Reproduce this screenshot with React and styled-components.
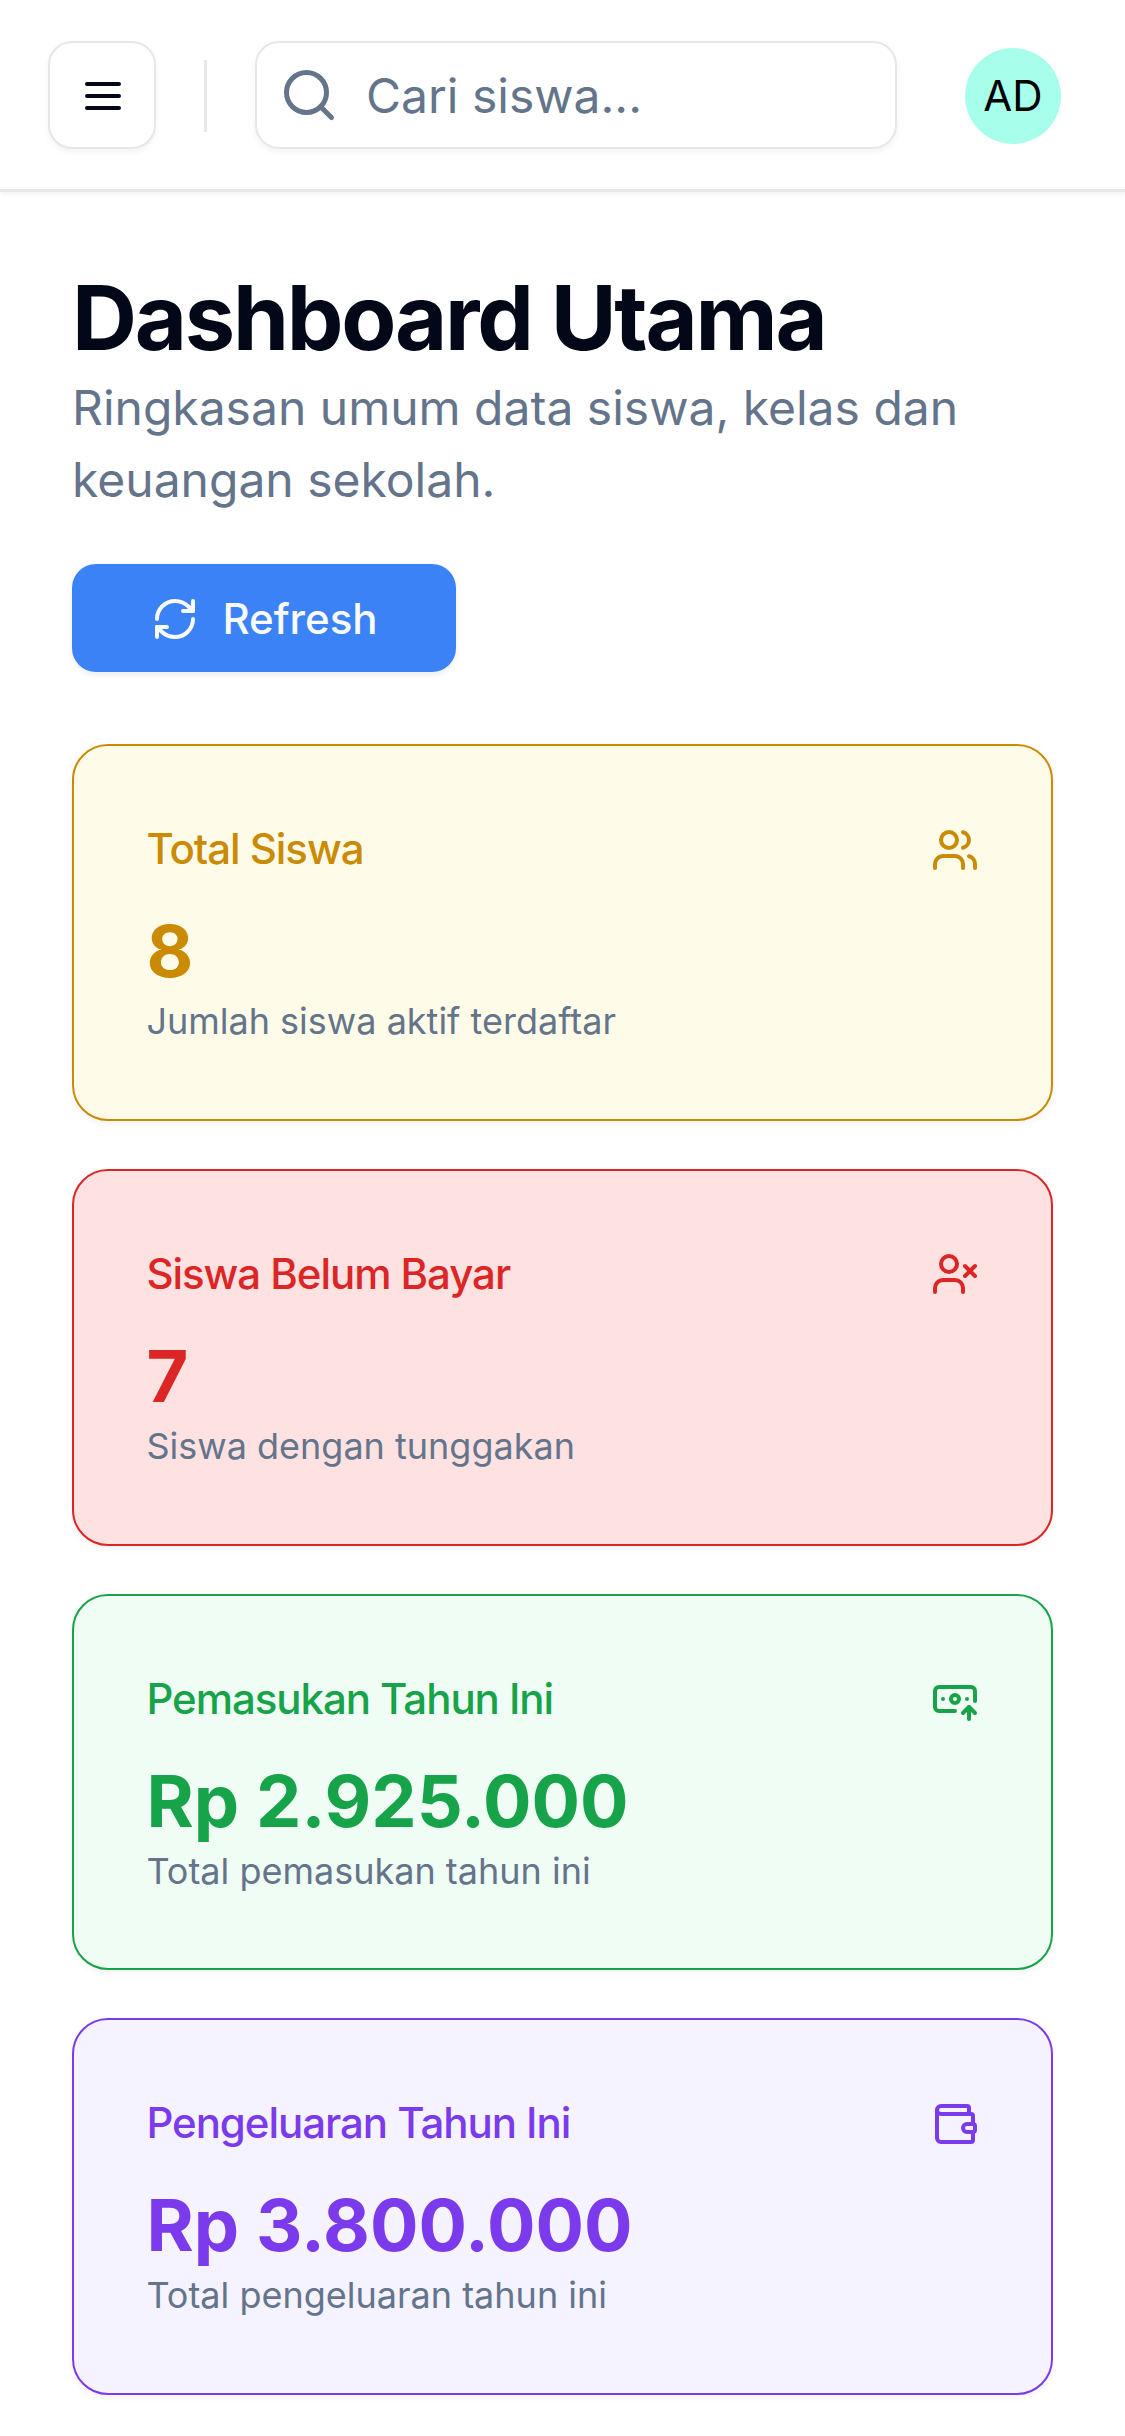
import React from "react";
import styled, { createGlobalStyle } from "styled-components";
import { Search, RefreshCw, Users, UserX, BanknoteArrowUp, Wallet } from "lucide-react";

const GlobalStyle = createGlobalStyle`
  *, *::before, *::after { box-sizing: border-box; }
  body {
    margin: 0;
    background: #fff;
    color: #020817;
    font-family: Inter, "Liberation Sans", sans-serif;
    font-size: 48px;
    line-height: 72px;
  }
  button, input { font-family: inherit; }
`;

const Page = styled.div`
  width: 1125px;
  height: 2436px;
  overflow: hidden;
`;

const Header = styled.header`
  display: flex;
  align-items: center;
  height: 192px;
  padding: 1px 64px 0 48px;
  border-bottom: 3px solid #e5e7eb;
  box-shadow: 0 3px 3px rgba(0, 0, 0, 0.04);
`;

const MenuButton = styled.button`
  display: flex;
  align-items: center;
  justify-content: center;
  width: 108px;
  height: 108px;
  padding: 2px 0 0 2px;
  color: #020817;
  background: #fff;
  border: 2px solid #e5e7eb;
  border-radius: 24px;
  box-shadow: 0 3px 6px rgba(0, 0, 0, 0.05);
`;

const Divider = styled.div`
  width: 3px;
  height: 72px;
  margin: 2px 48px 0;
  background: #e5e7eb;
`;

const SearchBox = styled.label`
  display: flex;
  align-items: center;
  gap: 27px;
  width: 642px;
  height: 108px;
  padding-left: 22px;
  color: #64748b;
  border: 2px solid #e5e7eb;
  border-radius: 24px;
  box-shadow: 0 3px 6px rgba(0, 0, 0, 0.05);
`;

const SearchInput = styled.input`
  flex: 1;
  min-width: 0;
  padding: 2px 0 0;
  border: 0;
  outline: 0;
  background: transparent;
  font-size: 48px;
  line-height: 72px;
  &::placeholder { color: #64748b; opacity: 1; }
`;

const Avatar = styled.div`
  display: grid;
  place-items: center;
  width: 96px;
  height: 96px;
  margin-top: 2px;
  margin-left: auto;
  border-radius: 50%;
  background: #a7ffeb;
  color: #000;
  font-size: 42px;
  line-height: 60px;
`;

const Main = styled.main`
  padding: 72px;
`;

const Title = styled.h1`
  margin: 0;
  padding: 3px 0;
  font-size: 90px;
  font-weight: 700;
  line-height: 102px;
  letter-spacing: -0.025em;
`;

const Subtitle = styled.p`
  margin: 0;
  color: #64748b;
`;

const RefreshButton = styled.button`
  display: flex;
  align-items: center;
  justify-content: center;
  gap: 23px;
  width: 384px;
  height: 108px;
  margin: 48px 0 72px;
  padding: 2px 0 0;
  border: 0;
  border-radius: 24px;
  background: #3b82f6;
  color: #f8fafc;
  font-size: 42px;
  font-weight: 500;
  line-height: 60px;
  box-shadow: 0 3px 6px rgba(0, 0, 0, 0.08);

  svg { margin-left: 1px; }
`;

const CardList = styled.section`
  display: grid;
  gap: 48px;
`;

const Card = styled.article`
  height: 376.8px;
  padding: 73px 72.4px 0;
  border: 2px solid ${(p) => p.$tone};
  border-radius: 36px;
  background: ${(p) => p.$fill};
  color: ${(p) => p.$tone};
  box-shadow: 0 3px 6px rgba(0, 0, 0, 0.05);
`;

const CardHeader = styled.div`
  display: flex;
  align-items: center;
  justify-content: space-between;
  padding-bottom: 24px;

  svg { margin-top: 1px; }
`;

const CardTitle = styled.h3`
  margin: 0;
  font-size: 42px;
  font-weight: 500;
  line-height: 60px;
  letter-spacing: -0.025em;
`;

const CardValue = styled.div`
  font-size: 72px;
  font-weight: 700;
  line-height: 96px;
`;

const CardNote = styled.p`
  margin: 0;
  color: #64748b;
  font-size: 36px;
  line-height: 45px;
`;

function MenuIcon() {
  return (
    <svg width="48" height="48" viewBox="0 0 24 24" fill="none" stroke="currentColor" strokeWidth="2" strokeLinecap="round">
      <path d="M4 6h16M4 12h16M4 18h16" />
    </svg>
  );
}

const cards = [
  { title: "Total Siswa", value: "8", note: "Jumlah siswa aktif terdaftar", tone: "#ca8a04", fill: "#fefce8", Icon: Users },
  { title: "Siswa Belum Bayar", value: "7", note: "Siswa dengan tunggakan", tone: "#dc2626", fill: "#fee2e2", Icon: UserX },
  { title: "Pemasukan Tahun Ini", value: "Rp 2.925.000", note: "Total pemasukan tahun ini", tone: "#16a34a", fill: "#f0fdf4", Icon: BanknoteArrowUp },
  { title: "Pengeluaran Tahun Ini", value: "Rp 3.800.000", note: "Total pengeluaran tahun ini", tone: "#7c3aed", fill: "#f5f3ff", Icon: Wallet },
];

export default function App() {
  return (
    <Page>
      <GlobalStyle />
      <Header>
        <MenuButton aria-label="Menu">
          <MenuIcon />
        </MenuButton>
        <Divider />
        <SearchBox>
          <Search size={60} />
          <SearchInput placeholder="Cari siswa..." />
        </SearchBox>
        <Avatar>AD</Avatar>
      </Header>
      <Main>
        <Title>Dashboard Utama</Title>
        <Subtitle>Ringkasan umum data siswa, kelas dan keuangan sekolah.</Subtitle>
        <RefreshButton>
          <RefreshCw size={48} />
          Refresh
        </RefreshButton>
        <CardList>
          {cards.map(({ title, value, note, tone, fill, Icon }) => (
            <Card key={title} $tone={tone} $fill={fill}>
              <CardHeader>
                <CardTitle>{title}</CardTitle>
                <Icon size={48} />
              </CardHeader>
              <CardValue>{value}</CardValue>
              <CardNote>{note}</CardNote>
            </Card>
          ))}
        </CardList>
      </Main>
    </Page>
  );
}
